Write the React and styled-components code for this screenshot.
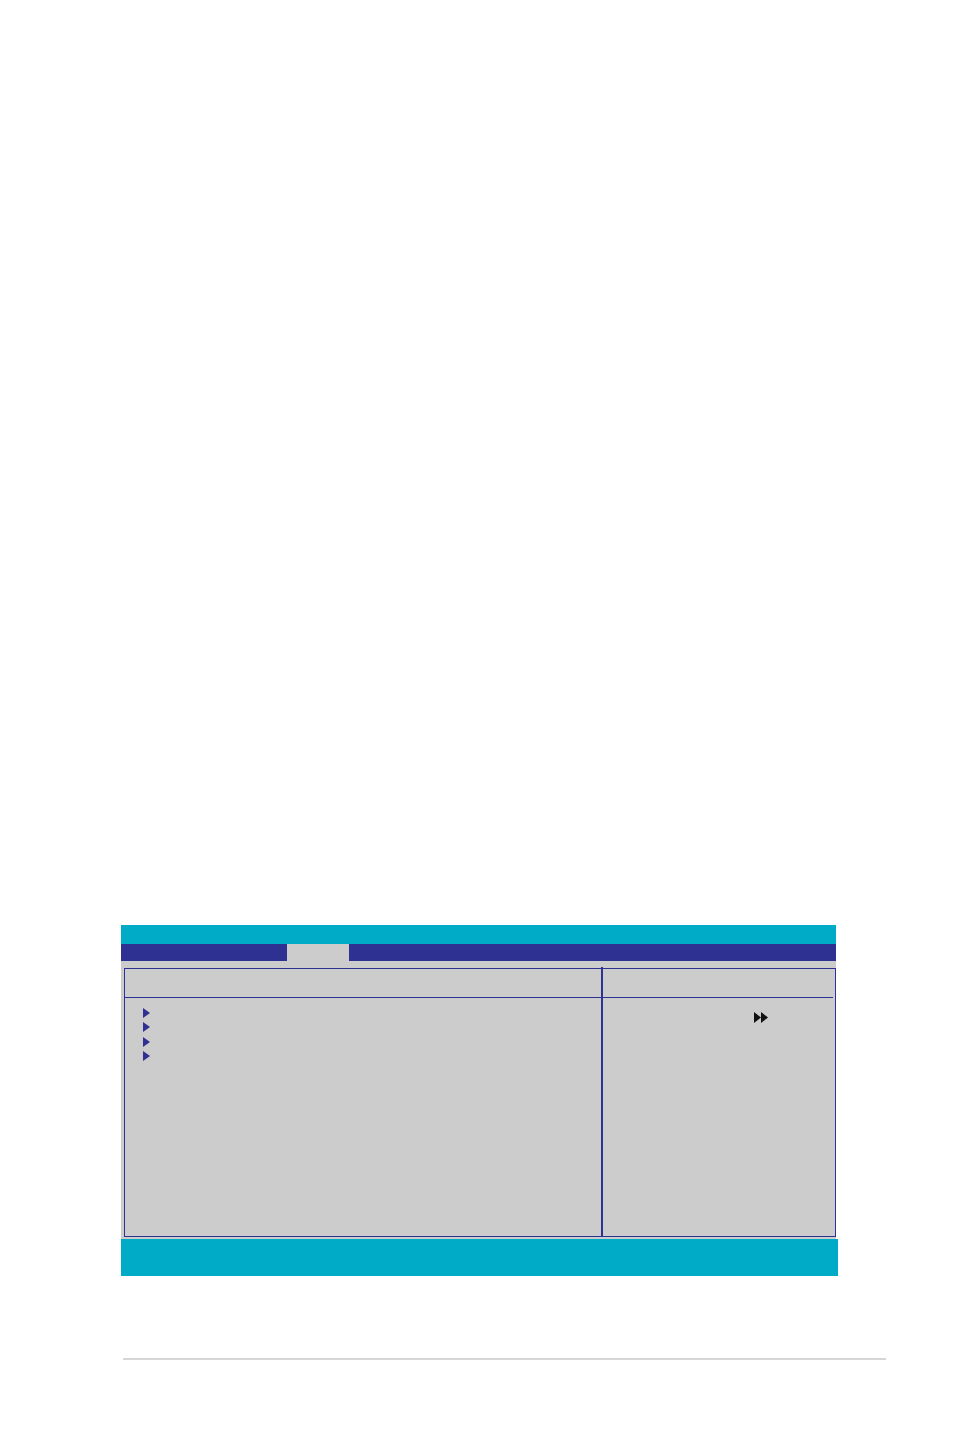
import React from "react";
import styled, { createGlobalStyle } from "styled-components";

const GlobalStyle = createGlobalStyle`
  html, body {
    margin: 0;
    padding: 0;
    background: #ffffff;
    font-family: "Liberation Sans", Arial, sans-serif;
  }
`;

const Page = styled.div`
  width: 954px;
  height: 1437px;
  padding-top: 925px;
  box-sizing: border-box;
  background: #ffffff;
`;

const Screen = styled.div`
  margin-left: 121px;
  width: 717px;
`;

const TitleBar = styled.div`
  width: 715px;
  height: 19px;
  background: #00abc7;
`;

const MenuBar = styled.div`
  width: 715px;
  height: 17px;
  background: #2e3192;
  display: flex;
  padding-left: 166px;
  box-sizing: border-box;
`;

const MenuTab = styled.div`
  width: 62px;
  height: 100%;
  background: ${(p) => (p.active ? "#cccccc" : "transparent")};
`;

const Body = styled.div`
  width: 715px;
  background: #cccccc;
  padding: 7px 0 2px 3px;
  box-sizing: border-box;
`;

const Frame = styled.div`
  height: 269px;
  border: 1px solid #2e3192;
  box-sizing: border-box;
  display: flex;
`;

const Column = styled.div`
  width: ${(p) => p.width}px;
  display: flex;
  flex-direction: column;
`;

const Divider = styled.div`
  width: 2px;
  margin-top: -2px;
  background: #2e3192;
`;

const ColumnHeader = styled.div`
  height: 28px;
`;

const HeaderRule = styled.div`
  height: 1px;
  background: #2e3192;
  margin-right: ${(p) => p.inset || 0}px;
`;

const ItemList = styled.div`
  padding: 8px 0 0 18px;
  display: flex;
  flex-direction: column;
`;

const Item = styled.div`
  height: 14.33px;
  display: flex;
  align-items: center;
  font-size: 11px;
  color: #2e3192;

  svg {
    display: block;
  }
`;

const HelpArea = styled.div`
  padding: 14px 0 0 151px;
  line-height: 0;

  svg {
    display: block;
  }
`;

const BottomBar = styled.div`
  width: 717px;
  height: 37px;
  background: #00abc7;
`;

const FooterRule = styled.div`
  margin: 82px 0 0 123px;
  width: 763px;
  height: 2px;
  background: #d6d6d6;
`;

const SubMenuArrow = () => (
  <svg width="7" height="10" viewBox="0 0 7 10">
    <polygon points="0,0 7,5 0,10" fill="#2e3192" />
  </svg>
);

const FastForward = () => (
  <svg width="14" height="11" viewBox="0 0 14 11">
    <polygon points="0,0 7,5.5 0,11" fill="#111111" />
    <polygon points="7,0 14,5.5 7,11" fill="#111111" />
  </svg>
);

export default function App() {
  const items = [0, 1, 2, 3];
  return (
    <Page>
      <GlobalStyle />
      <Screen>
        <TitleBar />
        <MenuBar>
          <MenuTab active />
        </MenuBar>
        <Body>
          <Frame>
            <Column width={476}>
              <ColumnHeader />
              <HeaderRule />
              <ItemList>
                {items.map((i) => (
                  <Item key={i}>
                    <SubMenuArrow />
                  </Item>
                ))}
              </ItemList>
            </Column>
            <Divider />
            <Column width={232}>
              <ColumnHeader />
              <HeaderRule inset={2} />
              <HelpArea>
                <FastForward />
              </HelpArea>
            </Column>
          </Frame>
        </Body>
        <BottomBar />
      </Screen>
      <FooterRule />
    </Page>
  );
}
